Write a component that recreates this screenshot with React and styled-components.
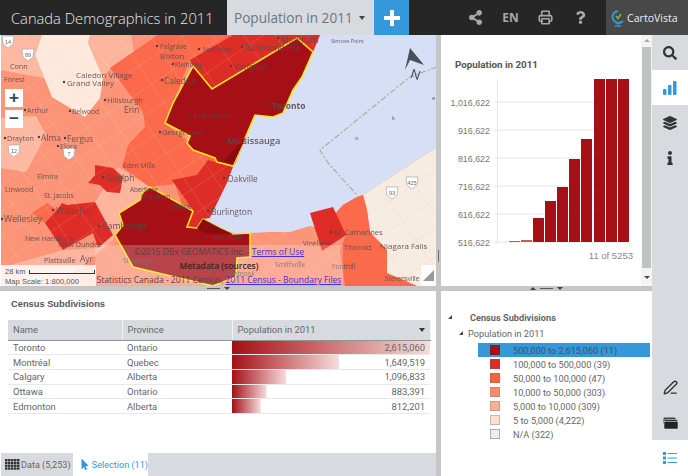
import React from 'react'
import styled, { createGlobalStyle } from 'styled-components'
import { FaSearch, FaLayerGroup, FaInfo, FaShareAlt, FaQuestion, FaMousePointer } from 'react-icons/fa'
import { Printer, PenLine } from 'lucide-react'

const BLUE = '#3498db'
const PANEL = '#d7dbe0'
const SPLIT = '#c5c7c7'
const DARKRED = '#a50f15'

const Global = createGlobalStyle`
  html, body { margin: 0; padding: 0; background: #fff; }
  * { box-sizing: border-box; }
  body { font-family: "Open Sans", "Liberation Sans", sans-serif; }
`

const Page = styled.div`
  width: 688px;
  height: 476px;
  display: flex;
  flex-direction: column;
  overflow: hidden;
`

/* header */
const Header = styled.header`
  height: 35px;
  display: flex;
  align-items: stretch;
  background: #262626;
  flex: none;
`
const AppTitle = styled.div`
  width: 227px;
  padding-left: 11px;
  display: flex;
  align-items: center;
  color: #e4e6e8;
  font-size: 14.7px;
  font-weight: 300;
  white-space: nowrap;
`
const MapTab = styled.div`
  width: 147px;
  padding: 0 9px 0 7px;
  display: flex;
  align-items: center;
  justify-content: space-between;
  background: ${PANEL};
  color: #6b7580;
  font-size: 13.6px;
  white-space: nowrap;
`
const Caret = styled.span`
  width: 0;
  height: 0;
  border-left: 3px solid transparent;
  border-right: 3px solid transparent;
  border-top: 4px solid ${p => p.$color || '#444'};
`
const AddButton = styled.div`
  width: 35px;
  background: ${BLUE};
  display: flex;
  align-items: center;
  justify-content: center;
`
const HeaderTools = styled.div`
  flex: 1;
  display: flex;
  align-items: center;
  justify-content: flex-end;
  color: #a8a8a8;
`
const HeaderTool = styled.div`
  width: 35px;
  display: flex;
  align-items: center;
  justify-content: center;
  font-size: 12px;
  font-weight: 700;
  margin-right: ${p => p.$gap || 0}px;
`
const Brand = styled.div`
  width: 82px;
  background: #484848;
  display: flex;
  align-items: center;
  gap: 1px;
  padding-left: 5px;
  color: #eceeef;
  font-size: 10.6px;
  font-weight: 400;
  white-space: nowrap;
`

/* workspace */
const Body = styled.div`
  flex: 1;
  display: flex;
  min-height: 0;
`
const Workspace = styled.div`
  width: 652px;
  display: grid;
  grid-template-columns: 436px 5px 211px;
  grid-template-rows: 251px 5px 185px;
`
const MapPanel = styled.div`
  position: relative;
  margin-left: 1px;
  overflow: hidden;
  background: #d6dff5;
`
const MapSvg = styled.svg`
  display: block;
  width: 436px;
  height: 251px;
  margin-left: -1px;
  filter: blur(0.35px);
`
const ZoomButtons = styled.div`
  position: absolute;
  left: 4px;
  top: 54px;
  display: flex;
  flex-direction: column;
  gap: 3px;
`
const ZoomButton = styled.div`
  width: 18px;
  height: 18px;
  background: #fff;
  color: #34495e;
  font-family: "Liberation Sans", sans-serif;
  font-size: 17px;
  font-weight: 700;
  line-height: 17px;
  text-align: center;
`
const Attribution = styled.div`
  position: absolute;
  left: 94px;
  bottom: 0;
  width: 248px;
  height: 41px;
  background: rgba(255, 255, 255, 0.22);
  color: #5b4040;
  font-size: 8.5px;
  line-height: 14px;
  text-align: center;
  white-space: nowrap;
`
const AttrLink = styled.span`
  color: #4b2fd0;
  text-decoration: underline;
`
const AttrStrong = styled.div`
  color: #3c2222;
  font-weight: 600;
`
const ScaleBox = styled.div`
  position: absolute;
  left: 0;
  bottom: 0;
  width: 95px;
  height: 21px;
  background: rgba(255, 255, 255, 0.82);
  color: #555;
  font-family: "Liberation Sans", sans-serif;
  font-size: 7.6px;
  padding: 2px 0 0 4px;
  line-height: 10px;
`
const ScaleRow = styled.div`
  display: flex;
  align-items: center;
  gap: 3px;
`
const ScaleBar = styled.div`
  width: 66px;
  height: 4px;
  border: 1px solid #333;
  border-top: 0;
`
const Corner = styled.div`
  position: absolute;
  right: 0;
  bottom: 0;
  width: 15px;
  height: 21px;
  background: rgba(255, 255, 255, 0.85);
  display: flex;
  align-items: center;
  justify-content: center;
`
const VSplit = styled.div`
  grid-column: 2;
  grid-row: 1 / 4;
  background: ${SPLIT};
  position: relative;
`
const VGrip = styled.div`
  position: absolute;
  left: 2px;
  top: 215px;
  width: 1px;
  height: 12px;
  background: #777;
`
const HSplit = styled.div`
  grid-row: 2;
  background: ${SPLIT};
  display: flex;
  align-items: center;
  justify-content: center;
  gap: 4px;
`
const GripLine = styled.span`
  width: 13px;
  height: 1px;
  background: #555;
`
const ChartPanel = styled.div`
  display: flex;
  background: #fff;
  min-height: 0;
`
const ChartBody = styled.div`
  flex: 1;
  display: flex;
  flex-direction: column;
`
const ChartTitle = styled.div`
  margin: 23px 0 0 14px;
  height: 14px;
  color: #555;
  font-family: Roboto, "Liberation Sans", sans-serif;
  font-size: 9.8px;
  font-weight: 700;
  line-height: 14px;
`
const ChartSvg = styled.svg`
  display: block;
  width: 200px;
  height: 176px;
`
const ChartFoot = styled.div`
  padding-right: 8px;
  margin-top: 2px;
  text-align: right;
  color: #888;
  font-family: "Liberation Sans", sans-serif;
  font-size: 9.5px;
  line-height: 12px;
`
const ScrollTrack = styled.div`
  width: 11px;
  background: #f4f4f4;
  display: flex;
  flex-direction: column;
  align-items: center;
  padding-top: 4px;
`
const ScrollThumb = styled.div`
  width: 9px;
  height: 221px;
  margin: 5px 0 8px;
  background: #c1c3c2;
`
const ArrowUp = styled.span`
  width: 0;
  height: 0;
  border-left: 3px solid transparent;
  border-right: 3px solid transparent;
  border-bottom: 3px solid ${p => p.$color || '#aaa'};
`
const ArrowDown = styled.span`
  width: 0;
  height: 0;
  border-left: 3px solid transparent;
  border-right: 3px solid transparent;
  border-top: 3px solid ${p => p.$color || '#444'};
`

/* table */
const TablePanel = styled.div`
  grid-row: 3;
  margin-left: 1px;
  display: flex;
  flex-direction: column;
  background: #fff;
`
const PanelHeading = styled.div`
  margin: 4px 0 0 10px;
  height: 18px;
  color: #555;
  font-family: "Liberation Sans", sans-serif;
  font-size: 9.3px;
  font-weight: 700;
  line-height: 18px;
`
const TableWrap = styled.div`
  flex: 1;
  padding: 7px 6px 0 7px;
`
const Grid = styled.table`
  width: 422px;
  table-layout: fixed;
  border-collapse: collapse;
  font-family: Roboto, "Liberation Sans", sans-serif;
  font-size: 9.4px;
  color: #666;
`
const Th = styled.th`
  height: 20px;
  padding: 0 5px;
  background: ${PANEL};
  border-right: 1px solid #f2f3f4;
  border-bottom: 1px solid #8f9498;
  font-weight: 400;
  text-align: left;
  position: relative;
`
const SortMark = styled.span`
  position: absolute;
  right: 5px;
  top: 8px;
  width: 0;
  height: 0;
  border-left: 3px solid transparent;
  border-right: 3px solid transparent;
  border-top: 4px solid #333;
`
const Td = styled.td`
  height: 14.7px;
  padding: 0 5px;
  border-bottom: 1px solid #e6e8ea;
  line-height: 13px;
  text-align: ${p => (p.$num ? 'right' : 'left')};
`
const BarCell = styled(Td)`
  background-image: linear-gradient(90deg, ${DARKRED}, #f6dcdc);
  background-repeat: no-repeat;
  background-size: ${p => p.$pct}% 100%;
`
const Tabs = styled.div`
  height: 23px;
  display: flex;
  background: ${PANEL};
  font-family: Roboto, "Liberation Sans", sans-serif;
  font-size: 9.1px;
  white-space: nowrap;
`
const Tab = styled.div`
  width: ${p => p.$w}px;
  display: flex;
  align-items: center;
  gap: ${p => p.$gap}px;
  padding-left: ${p => p.$pad}px;
  background: ${p => (p.$on ? '#fff' : 'transparent')};
  color: ${p => (p.$on ? BLUE : '#666')};
`

/* legend */
const LegendPanel = styled.div`
  grid-row: 3;
  grid-column: 3;
  background: #fff;
  padding-top: 18px;
  font-family: Roboto, "Liberation Sans", sans-serif;
  font-size: 9.2px;
  color: #666;
  white-space: nowrap;
`
const TreeRow = styled.div`
  display: flex;
  align-items: center;
  height: ${p => p.$h}px;
  padding-left: ${p => p.$pad}px;
  gap: ${p => p.$gap}px;
  font-weight: ${p => (p.$bold ? 700 : 400)};
`
const TreeArrow = styled.span`
  width: 0;
  height: 0;
  border-left: 4px solid transparent;
  border-bottom: 4px solid #444;
`
const LegendRows = styled.div`
  margin: 2px 2px 0 37px;
`
const LegendRow = styled.div`
  height: 14px;
  display: flex;
  align-items: center;
  padding-left: 12px;
  gap: 13px;
  background: ${p => (p.$on ? BLUE : 'transparent')};
  color: ${p => (p.$on ? '#4a4f55' : 'inherit')};
`
const Swatch = styled.span`
  width: 10px;
  height: 10px;
  background: ${p => p.$color};
  border: 1px solid ${p => p.$edge};
`

/* sidebar */
const Sidebar = styled.nav`
  width: 36px;
  display: flex;
  flex-direction: column;
  background: ${PANEL};
  color: #333;
`
const SideItem = styled.div`
  height: ${p => p.$h || 35}px;
  display: flex;
  align-items: center;
  justify-content: center;
  background: ${p => (p.$on ? '#fff' : 'transparent')};
`
const Spacer = styled.div`
  flex: 1;
`

const regions = [
  ['#fcb8a0', '0,35 42,35 35,55 44,78 0,70'],
  ['#fcb49c', '90,35 131,35 134,52 110,68 103,78 88,43'],
  ['#fde9dc', '42,35 90,35 88,43 103,78 100,98 85,117 52,97 35,55'],
  ['#fcb8a0', '0,118 36,116 46,135 30,165 26,172 0,168'],
  ['#fb6a4a', '110,68 133,52 158,35 235,35 190,60 165,124 170,150 150,187 122,167 128,145 145,127 143,112'],
  ['#fb6a4a', '165,124 200,150 175,184 150,187'],
  ['#fb6a4a', '175,184 200,150 240,150 233,170 197,230 190,230'],
  ['#de2d26', '190,60 233,35 334,35 313,52 297,38 212,89 193,66'],
  ['#de2d26', '208,160 197,175 172,180 193,210 187,227 193,229 210,218 227,183 233,167'],
  ['#fcb49c', '118,167 150,187 143,192 140,200 119,213 123,225 115,235 113,240 98,248 93,233 95,202'],
  ['#fcb49c', '0,268 63,250 98,248 113,240 70,276 50,286 0,286'],
  ['#fb6a4a', '32,213 47,203 57,210 45,223'],
  ['#de2d26', '45,223 57,210 62,203 67,205 95,202 113,235 98,248 93,233 63,250'],
  ['#de2d26', '95,165 113,168 123,177 120,193 107,192 100,185 88,183 95,175'],
]

// these two run out over the lake in the reference, so they go on top of it
const coastal = [
  ['#fb6a4a', '333,216 343,205 357,197 363,195 367,210 370,232 387,250 387,273 417,286 345,286 340,250 346,235'],
  ['#de2d26', '310,213 333,207 346,235 322,251'],
]

const selected = [
  '193,66 212,89 297,38 313,52 302,77 293,90 283,113 273,117 255,115 240,150 233,166 217,162 215,158 193,150 187,143 190,136 165,123 173,103',
  '150,187 193,211 187,227 197,228 203,219 220,228 233,234 250,233 250,257 237,258 236,277 213,286 133,267 115,235 123,225 119,213 140,200 143,192',
]

// darker patches inside the selected areas
const shaded = [
  '246,137 239,152 233,165 224,161',
  '197,228 203,219 220,228 233,234 205,233',
]

const LAKE = '320,35 313,52 302,77 293,90 283,113 273,117 255,115 236,163 233,167 227,183 210,218 203,219 220,228 233,233 250,233 270,232 290,232 310,226 322,228 343,205 357,197 363,195 437,147 437,35'
const TAN = '363,195 437,147 437,286 417,286 387,273 387,250 370,232 367,210'

const labels = [
  [160, 46, 'Palgrave', 8], [160, 55, 'Bolton', 9.5], [203, 49, 'Nobleton', 8], [175, 64, 'Kleinburg', 7.5],
  [245, 47, 'Richmond Hill', 10], [281, 39, 'Markham', 10], [234, 66, 'Vaughan', 10], [164, 80, 'Caledon', 10],
  [76, 74, 'Caledon Village', 9.5], [67, 82, 'Grand Valley', 9.5], [107, 100, 'Hillsburgh', 9], [124, 109, 'Erin', 10],
  [10, 66, 'Conn', 8.5], [4, 79, 'Forest', 8.5], [27, 110, 'Arthur', 8.5], [72, 111, 'Belwood', 8], [7, 138, 'Drayton', 8.5],
  [41, 137, 'Alma', 10], [67, 138, 'Fergus', 10], [60, 146, 'Elora', 8.5], [162, 132, 'Georgetown', 8.5],
  [193, 114, 'Brampton', 9.5], [272, 105, 'Toronto', 10, 700], [227, 140, 'Mississauga', 11, 600],
  [331, 41, 'Simcoe Point', 6.5], [227, 178, 'Oakville', 10], [211, 211, 'Burlington', 10], [211, 237, 'Hamilton', 8.5],
  [123, 165, 'Eden Mills', 8], [37, 176, 'Elmira', 8.5], [106, 177, 'Guelph', 10], [5, 189, 'Linwood', 8.5],
  [44, 195, 'St. Jacobs', 8], [130, 189, 'Aberfoyle', 7.5], [141, 196, 'Morriston', 7.5], [170, 206, 'Carlisle', 7.5],
  [56, 210, 'Waterloo', 10], [4, 219, 'Wellesley', 10.5], [102, 226, 'Cambridge', 10.5], [25, 238, 'New Hamburg', 8.5],
  [59, 244, 'New Dundee', 8.5], [44, 260, 'Plattsville', 8.5], [80, 258, 'Ayr', 10], [123, 260, 'St George', 7.5],
  [275, 264, 'Smithville', 8], [303, 243, 'Vineland', 8], [334, 232, 'St. Catharines', 9], [344, 247, 'Thorold', 9],
  [380, 245, 'Niagara Falls', 9.5], [332, 266, 'Fonthill', 8], [385, 278, 'Stevensville', 7.5], [228, 273, 'Binbrook', 7.5],
  [432, 98, 'e', 7], [392, 118, 'k', 7], [355, 138, 'o', 7],
]

const dots = [
  [157, 46], [199, 49], [173, 64], [242, 47], [278, 38], [231, 66], [162, 80], [64, 82], [105, 100], [25, 110], [70, 111],
  [5, 138], [39, 137], [65, 138], [58, 146], [160, 132], [190, 114], [224, 140], [224, 178], [208, 211], [207, 237],
  [53, 210], [99, 226], [103, 177], [331, 232], [2, 219], [267, 105],
]

const shields = [
  [8, 42, '14'], [28, 55, '89'], [14, 151, '12'], [69, 154, '7'], [392, 193, '93'], [412, 183, '425'],
]

function AreaMap() {
  return (
    <MapSvg viewBox="0 35 436 251">
      <defs>
        <pattern id="roads" width="26" height="22" patternUnits="userSpaceOnUse" patternTransform="rotate(-34)">
          <path d="M0 0H26M0 0V22" stroke="#fff" strokeOpacity=".2" strokeWidth="1" fill="none" />
        </pattern>
        <pattern id="tanroads" width="30" height="24" patternUnits="userSpaceOnUse" patternTransform="rotate(-34)">
          <path d="M0 0H30M0 0V24" stroke="#eccdb5" strokeOpacity=".7" strokeWidth=".8" fill="none" />
        </pattern>
      </defs>
      <rect x="0" y="35" width="437" height="251" fill="#fc9478" />
      {regions.map(([fill, points]) => (
        <polygon key={points} points={points} fill={fill} />
      ))}
      <rect x="0" y="35" width="437" height="251" fill="url(#roads)" />
      <polygon points={LAKE} fill="#d6dff5" />
      <polygon points={TAN} fill="#f6ece1" />
      <polygon points={TAN} fill="url(#tanroads)" />
      {coastal.map(([fill, points]) => (
        <polygon key={points} points={points} fill={fill} />
      ))}
      {selected.map(points => (
        <polygon key={points} points={points} fill={DARKRED} stroke="#f6e717" strokeWidth="1.6" />
      ))}
      {shaded.map(points => (
        <polygon key={points} points={points} fill="#8a0c10" />
      ))}
      <polyline points="437,67 410,77 320,150 328,163 357,195" fill="none" stroke="#b5ab98" strokeWidth="1.2" strokeDasharray="6 2 2 2" />
      <path d="M410 48L405 70L410 60L424 65Z" fill="#4a5058" />
      <text x="411" y="79" fontSize="13" fontFamily="Liberation Sans" fill="#4a5058" transform="rotate(18 416 74)">N</text>
      {shields.map(([x, y, t]) => (
        <g key={t}>
          <path d={`M${x - 6} ${y - 6}H${x + 6}L${x + 5} ${y + 2}L${x} ${y + 6}L${x - 5} ${y + 2}Z`} fill="#fff" stroke="#aaa" strokeWidth=".7" />
          <text x={x} y={y + 2} fontSize="5.5" textAnchor="middle" fill="#666" fontFamily="Liberation Sans">{t}</text>
        </g>
      ))}
      {dots.map(([x, y]) => (
        <circle key={`${x}-${y}`} cx={x} cy={y} r="1.2" fill="#5a3a3a" />
      ))}
      {labels.map(([x, y, t, size, weight]) => (
        <text key={t} x={x} y={y} fontSize={size * 0.84} fontWeight={weight || 400} dominantBaseline="central" fontFamily="Open Sans" fill="#5a4a50" fillOpacity=".9">{t}</text>
      ))}
    </MapSvg>
  )
}

const bars = [
  [509, 241], [521, 240], [533, 218], [545, 201], [557, 187], [569, 159], [581, 139], [594, 79], [606, 79], [618, 79],
]
const ticks = [
  [102, '1,016,622'], [130, '916,622'], [158, '816,622'], [186, '716,622'], [214, '616,622'], [242, '516,622'],
]

function Histogram() {
  return (
    <ChartSvg viewBox="441 72 200 176">
      <line x1="497.5" y1="79" x2="497.5" y2="244" stroke="#e6e6e6" />
      {ticks.map(([y, t]) => (
        <g key={t}>
          <line x1="494" y1={y} x2="630" y2={y} stroke="#e6e6e6" />
          <text x="490" y={y + 3.5} fontSize="8.9" textAnchor="end" fill="#777" fontFamily="Liberation Sans">{t}</text>
        </g>
      ))}
      {bars.map(([x, top], i) => (
        <rect key={x} x={x} y={top} width="11" height={242 - top} fill={i < 2 ? '#c9585c' : DARKRED} />
      ))}
    </ChartSvg>
  )
}

const rows = [
  ['Toronto', 'Ontario', '2,615,060', 100],
  ['Montréal', 'Quebec', '1,649,519', 54],
  ['Calgary', 'Alberta', '1,096,833', 27.5],
  ['Ottawa', 'Ontario', '883,391', 17.5],
  ['Edmonton', 'Alberta', '812,201', 14.5],
]

const legend = [
  ['#a50f15', '#7d1a1e', '500,000 to 2,615,060 (11)'],
  ['#de2d26', '#a8443f', '100,000 to 500,000 (39)'],
  ['#fb5f3f', '#c4674f', '50,000 to 100,000 (47)'],
  ['#fc8a6a', '#c98670', '10,000 to 50,000 (303)'],
  ['#fcae91', '#c89c8a', '5,000 to 10,000 (309)'],
  ['#fee0d2', '#c9b7ae', '5 to 5,000 (4,222)'],
  ['#eeeeee', '#aaaaaa', 'N/A (322)'],
]

const GridIcon = () => (
  <svg width="15" height="11" viewBox="0 0 15 11">
    {[0, 1, 2, 3].map(r => [0, 1, 2, 3, 4].map(c => (
      <rect key={`${r}${c}`} x={c * 3} y={r * 2.8} width="2.5" height="2.3" fill="#333" />
    )))}
  </svg>
)

const Globe = () => (
  <svg width="15" height="18" viewBox="0 0 15 18">
    <path d="M7 2A6 6 0 1 0 12 12" fill="none" stroke={BLUE} strokeWidth="2" />
    <path d="M5 7L7 9.500L10 5" fill="none" stroke="#7fb53a" strokeWidth="1.6" />
    <path d="M7 14V16M4 17H10" stroke={BLUE} strokeWidth="1.4" />
  </svg>
)

const BarsIcon = () => (
  <svg width="14" height="14" viewBox="0 0 14 14" fill={BLUE}>
    <rect x="0" y="8" width="3.500" height="6" rx="1" />
    <rect x="5" y="4" width="3.500" height="10" rx="1" />
    <rect x="10" y="0" width="3.500" height="14" rx="1" />
  </svg>
)

const CardsIcon = () => (
  <svg width="15" height="12" viewBox="0 0 15 12">
    <rect x="0.500" y="0.500" width="12" height="7" rx="1" fill="#444" />
    <rect x="1.500" y="2.500" width="13" height="7" rx="1" fill="#333" stroke={PANEL} strokeWidth=".6" />
    <rect x="1" y="4.500" width="14" height="7.500" rx="1" fill="#222" stroke={PANEL} strokeWidth=".6" />
  </svg>
)

const ListIcon = () => (
  <svg width="14" height="12" viewBox="0 0 14 12" fill={BLUE}>
    <rect x="0" y="0" width="3" height="3" />
    <rect x="0" y="4.500" width="3" height="3" />
    <rect x="0" y="9" width="3" height="3" />
    <rect x="4.500" y="1" width="9.500" height="1" />
    <rect x="4.500" y="5.500" width="9.500" height="1" />
    <rect x="4.500" y="10" width="9.500" height="1" />
  </svg>
)

export default function App() {
  return (
    <Page>
      <Global />
      <Header>
        <AppTitle>Canada Demographics in 2011</AppTitle>
        <MapTab>Population in 2011<Caret /></MapTab>
        <AddButton>
          <svg width="16" height="16" viewBox="0 0 16 16">
            <path d="M8 0V16M0 8H16" stroke="#fff" strokeWidth="4" />
          </svg>
        </AddButton>
        <HeaderTools>
          <HeaderTool><FaShareAlt size={15} /></HeaderTool>
          <HeaderTool>EN</HeaderTool>
          <HeaderTool><Printer size={15} strokeWidth={2.6} /></HeaderTool>
          <HeaderTool $gap={8}><FaQuestion size={13} /></HeaderTool>
        </HeaderTools>
        <Brand><Globe />CartoVista</Brand>
      </Header>
      <Body>
        <Workspace>
          <MapPanel>
            <AreaMap />
            <ZoomButtons>
              <ZoomButton>+</ZoomButton>
              <ZoomButton>−</ZoomButton>
            </ZoomButtons>
            <Attribution>
              <div>©2015 DBx GEOMATICS Inc. - <AttrLink>Terms of Use</AttrLink></div>
              <AttrStrong>Metadata (sources)</AttrStrong>
              <div>Statistics Canada - 2011 Census, <AttrLink>2011 Census - Boundary Files</AttrLink></div>
            </Attribution>
            <ScaleBox>
              <ScaleRow>28 km<ScaleBar /></ScaleRow>
              <div>Map Scale: 1:800,000</div>
            </ScaleBox>
            <Corner>
              <svg width="11" height="11" viewBox="0 0 11 11"><path d="M0 11L11 0V11Z" fill="#999" /></svg>
            </Corner>
          </MapPanel>
          <VSplit><VGrip /></VSplit>
          <ChartPanel>
            <ChartBody>
              <ChartTitle>Population in 2011</ChartTitle>
              <Histogram />
              <ChartFoot>11 of 5253</ChartFoot>
            </ChartBody>
            <ScrollTrack>
              <ArrowUp />
              <ScrollThumb />
              <ArrowDown />
            </ScrollTrack>
          </ChartPanel>
          <HSplit><GripLine /><ArrowDown /></HSplit>
          <HSplit><ArrowUp $color="#444" /><GripLine /><ArrowDown /></HSplit>
          <TablePanel>
            <PanelHeading>Census Subdivisions</PanelHeading>
            <TableWrap>
              <Grid>
                <colgroup>
                  <col width="114" />
                  <col width="110" />
                  <col width="198" />
                </colgroup>
                <thead>
                  <tr>
                    <Th>Name</Th>
                    <Th>Province</Th>
                    <Th>Population in 2011<SortMark /></Th>
                  </tr>
                </thead>
                <tbody>
                  {rows.map(([name, prov, pop, pct]) => (
                    <tr key={name}>
                      <Td>{name}</Td>
                      <Td>{prov}</Td>
                      <BarCell $num $pct={pct}>{pop}</BarCell>
                    </tr>
                  ))}
                </tbody>
              </Grid>
            </TableWrap>
            <Tabs>
              <Tab $w={72} $pad={4} $gap={1}><GridIcon />Data (5,253)</Tab>
              <Tab $on $w={75} $pad={7} $gap={2}><FaMousePointer size={11} />Selection (11)</Tab>
            </Tabs>
          </TablePanel>
          <LegendPanel>
            <TreeRow $h={16} $pad={7} $gap={18} $bold><TreeArrow />Census Subdivisions</TreeRow>
            <TreeRow $h={16} $pad={18} $gap={5}><TreeArrow />Population in 2011</TreeRow>
            <LegendRows>
              {legend.map(([color, edge, text], i) => (
                <LegendRow key={text} $on={i === 0}>
                  <Swatch $color={color} $edge={edge} />
                  {text}
                </LegendRow>
              ))}
            </LegendRows>
          </LegendPanel>
        </Workspace>
        <Sidebar>
          <SideItem><FaSearch size={14} /></SideItem>
          <SideItem $on><BarsIcon /></SideItem>
          <SideItem><FaLayerGroup size={14} /></SideItem>
          <SideItem><FaInfo size={14} /></SideItem>
          <Spacer />
          <SideItem><PenLine size={15} strokeWidth={2.2} /></SideItem>
          <SideItem><CardsIcon /></SideItem>
          <SideItem $on $h={36}><ListIcon /></SideItem>
        </Sidebar>
      </Body>
    </Page>
  )
}
